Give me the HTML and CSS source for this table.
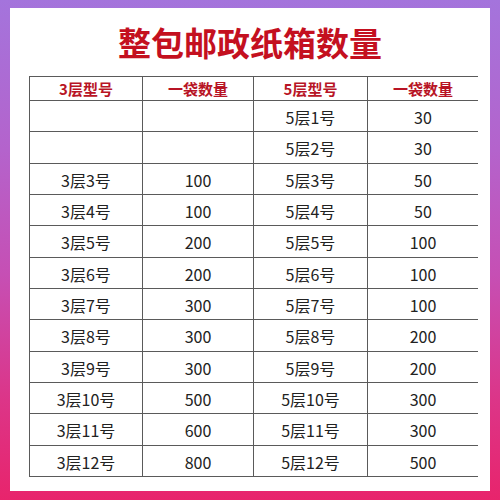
FILE: index.html
```html
<!DOCTYPE html>
<html lang="zh">
<head>
<meta charset="utf-8">
<link rel="stylesheet" href="styles.css">
</head>
<body>
<div class="panel">
  <h1 class="title">整包邮政纸箱数量</h1>
  <div class="grid">
    <div class="h">3层型号</div><div class="h">一袋数量</div><div class="h">5层型号</div><div class="h">一袋数量</div>
    <div></div><div></div><div>5层1号</div><div>30</div>
    <div></div><div></div><div>5层2号</div><div>30</div>
    <div>3层3号</div><div>100</div><div>5层3号</div><div>50</div>
    <div>3层4号</div><div>100</div><div>5层4号</div><div>50</div>
    <div>3层5号</div><div>200</div><div>5层5号</div><div>100</div>
    <div>3层6号</div><div>200</div><div>5层6号</div><div>100</div>
    <div>3层7号</div><div>300</div><div>5层7号</div><div>100</div>
    <div>3层8号</div><div>300</div><div>5层8号</div><div>200</div>
    <div>3层9号</div><div>300</div><div>5层9号</div><div>200</div>
    <div>3层10号</div><div>500</div><div>5层10号</div><div>300</div>
    <div>3层11号</div><div>600</div><div>5层11号</div><div>300</div>
    <div>3层12号</div><div>800</div><div>5层12号</div><div>500</div>
  </div>
</div>
</body>
</html>
```
FILE: styles.css
```css
html, body {
  margin: 0;
  padding: 0;
}
body {
  width: 500px;
  height: 500px;
  overflow: hidden;
  background: linear-gradient(180deg, #a474dc 0%, #b463cc 30%, #c64fb4 55%, #dc3588 80%, #e8246c 100%);
  font-family: "Noto Sans CJK SC", "Noto Sans", sans-serif;
  padding-top: 8px;
  box-sizing: border-box;
}
.panel {
  margin: 0 10px 0 10px;
  width: 480px;
  height: 483px;
  background: #ffffff;
  display: flex;
  flex-direction: column;
}
.title {
  margin: 0;
  height: 68px;
  line-height: 68px;
  text-align: center;
  font-size: 33px;
  font-weight: 700;
  color: #c4101f;
}
.grid {
  margin-left: 19px;
  width: 449px;
  height: 401px;
  box-sizing: border-box;
  display: grid;
  grid-template-columns: 112px 110px 113px 110px;
  grid-template-rows: 23px repeat(12, 1fr);
  gap: 1px;
  border: 1px solid #5a5a5a;
  background: #5a5a5a;
}
.grid > div {
  background: #ffffff;
  display: flex;
  align-items: center;
  justify-content: center;
  font-size: 16px;
  color: #222222;
  padding-top: 2px;
}
.grid > .h {
  font-size: 15px;
  font-weight: 700;
  color: #b81425;
  padding-top: 0;
}
```
